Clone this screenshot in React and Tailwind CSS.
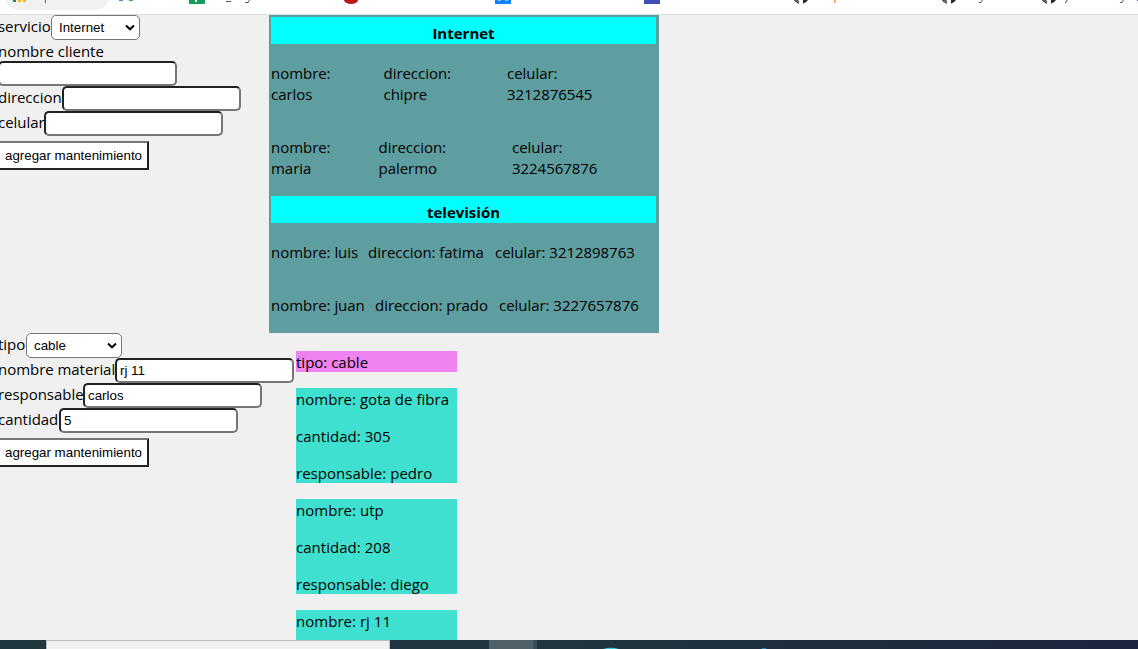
const T = ({ children, className = "" }) => (
  <span className={"block whitespace-nowrap " + className}>{children}</span>
);

function Label({ children, className }) {
  return (
    <label className={"shrink-0 leading-[23px] tracking-[-0.04px] whitespace-nowrap " + className}>
      {children}
    </label>
  );
}

function Field({ label, labelClass, value = "" }) {
  return (
    <div className="flex h-[25px]">
      <Label className={labelClass}>{label}</Label>
      <TextInput value={value} />
    </div>
  );
}

function TextInput({ value = "" }) {
  return (
    <input
      readOnly
      value={value}
      className="block h-[25px] w-[179px] shrink-0 rounded-[5px] border-2 border-t-[#222] border-l-[#222] border-r-[#767676] border-b-[#767676] bg-white px-[3px] font-['Liberation_Sans',sans-serif] text-[13.33px] tracking-normal text-black"
    />
  );
}

function Select({ label, labelClass, value, selectClass }) {
  return (
    <div className="flex h-[25px]">
      <Label className={labelClass}>{label}</Label>
      <div className={"relative h-[25px] shrink-0 " + selectClass}>
        <select className="block h-full w-full appearance-none rounded-[5px] border border-[#767676] bg-white pl-[7px] font-['Liberation_Sans',sans-serif] text-[13.33px] tracking-normal text-black">
          <option>{value}</option>
        </select>
        <svg className="pointer-events-none absolute top-[9px] right-[5px]" width="10" height="8" viewBox="0 0 10 8">
          <path d="M1 1.500 5 5.300 9 1.500" fill="none" stroke="#000" strokeWidth="2" />
        </svg>
      </div>
    </div>
  );
}

function AddButton() {
  return (
    <button className="mt-[5px] block h-[29px] w-[151px] border-2 border-t-[#767676] border-l-[#767676] border-r-[#222] border-b-[#222] bg-white text-center font-['Liberation_Sans',sans-serif] text-[13.33px] tracking-normal whitespace-nowrap text-black">
      agregar mantenimiento
    </button>
  );
}

function Client({ name, address, phone, cols, stacked }) {
  const pair = (k, v) =>
    stacked ? (
      <div>
        <T>{k}:</T>
        <T>{v}</T>
      </div>
    ) : (
      <T>{k}: {v}</T>
    );
  return (
    <div className={"grid leading-[21px] tracking-[-0.04px] " + cols}>
      {pair("nombre", name)}
      {pair("direccion", address)}
      {pair("celular", phone)}
    </div>
  );
}

function Material({ name, amount, owner }) {
  return (
    <div className="mt-4 flex h-[95px] flex-col gap-[14px] bg-[#40e0d0] leading-[23px] tracking-[0.03px]">
      <T>nombre: {name}</T>
      <T>cantidad: {amount}</T>
      <T>responsable: {owner}</T>
    </div>
  );
}

function Bookmarks() {
  return (
    <svg className="block h-[15px] w-[1138px] bg-white" viewBox="0 0 1138 15">
      <path d="M6 0a13 10 0 0 0 13 10H95a13 10 0 0 0 13-10Z" fill="#f1f1f1" />
      <path d="M13 0h3v2h-3z" fill="#1e8e3e" />
      <path d="M18 0h3v2h-3zM23 0h3v2h-3z" fill="#fbb400" />
      <path d="M45.500 0v3" stroke="#6b5b80" />
      <path d="M119 0h4v1h-4z" fill="#4285f4" />
      <path d="M129 0h4v1h-4z" fill="#34a853" />
      <path d="M189 0h16v3a1 1 0 0 1-1 1h-14a1 1 0 0 1-1-1z" fill="#0f9d58" />
      <path d="M195 0h2v2h-2z" fill="#fff" />
      <path d="M226 1.500h5M245 2.500h3l1.500-2.500" fill="none" stroke="#555" />
      <path d="M344 0a7 4 0 0 0 14 0z" fill="#b91517" />
      <path d="M495 0h16v4h-16z" fill="#0a84ff" />
      <path d="M498 .500h3M505 .500h3" stroke="#8cc8ff" />
      <path d="M644 0h16v4h-16z" fill="#3f51b5" />
      {[794, 942, 1042].map((x) => (
        <g key={x} transform={`translate(${x} 0)`}>
          <path d="M.5 0Q2 2.500 5 3.200M2.500 0q1 1.500 2.500 1" fill="none" stroke="#24292f" strokeWidth="1.300" />
          <path d="M9 0h5q-1.500 2.500-5 3.700z" fill="#24292f" />
        </g>
      ))}
      <path d="M834.500 0v3" stroke="#e8a25c" />
      <path d="M835.500 0v3" stroke="#9ccbf0" />
      <path d="M979 2.500h2l1.500-2.500M1065 2.500h1l1-2.500M1120 2.500h2l1.500-2.500M1137.500 0v1" fill="none" stroke="#555577" />
      <path d="M0 14.500h1138" stroke="#dadce0" />
    </svg>
  );
}

function Taskbar() {
  return (
    <div className="flex h-[9px] bg-linear-to-r from-[#20373f] via-[#20353f] to-[#1c243c]">
      <div className="w-[46px]" />
      <div className="w-[344px] border-x border-t border-[#bcbcbc] bg-[#f1f1f1]" />
      <div className="w-[99px]" />
      <div className="w-[44px] bg-[#4f6068]" />
      <div className="w-[4px] bg-[#3a4a56]" />
      <svg className="block h-[9px] w-[240px]" viewBox="0 0 240 9">
        <path d="M66 9q8-2.500 16 0z" fill="#39c5d8" />
        <path d="M224 9q3-2 6 0z" fill="#2d8bc9" />
      </svg>
    </div>
  );
}

export default function App() {
  return (
    <div className="flex h-[649px] w-[1138px] flex-col overflow-hidden bg-[#f0f0f0] font-['Open_Sans',sans-serif] text-[15px] text-black">
      <Bookmarks />
      <main className="h-[625px] overflow-hidden">
        <section className="flex h-[318px]">
          <form className="-ml-[2px] w-[271px] shrink-0">
            <Select label="servicio" labelClass="w-[53px]" value="Internet" selectClass="w-[89px]" />
            <T className="h-[21px] leading-[22px]">nombre cliente</T>
            <TextInput />
            <Field label="direccion" labelClass="w-[64px]" />
            <Field label="celular" labelClass="w-[46px]" />
            <AddButton />
          </form>
          <div className="h-[318px] w-[390px] bg-[#5f9ea0] pt-[2px] pr-[3px] pl-[2px]">
            <h2 className="h-[27px] bg-[#0ff] text-center leading-[33px] font-bold">Internet</h2>
            <div className="flex h-[152px] flex-col gap-8 pt-[19px]">
              <Client stacked name="carlos" address="chipre" phone="3212876545" cols="grid-cols-[112.500px_123.500px_1fr]" />
              <Client stacked name="maria" address="palermo" phone="3224567876" cols="grid-cols-[107.500px_133.500px_1fr]" />
            </div>
            <h2 className="h-[27px] bg-[#0ff] text-center leading-[33px] font-bold">televisión</h2>
            <div className="flex flex-col gap-8 pt-[19px]">
              <Client name="luis" address="fatima" phone="3212898763" cols="grid-cols-[97px_127px_1fr]" />
              <Client name="juan" address="prado" phone="3227657876" cols="grid-cols-[104px_124px_1fr]" />
            </div>
          </div>
        </section>
        <section className="flex">
          <form className="-ml-[2px] w-[298px] shrink-0">
            <Select label="tipo" labelClass="w-[28px]" value="cable" selectClass="w-[96px]" />
            <Field label="nombre material" labelClass="w-[117px]" value="rj 11" />
            <Field label="responsable" labelClass="w-[85px]" value="carlos" />
            <Field label="cantidad" labelClass="w-[61px]" value="5" />
            <AddButton />
          </form>
          <div className="w-[161px] pt-[18px]">
            <T className="h-[21px] bg-[#ee82ee] leading-[23px]">tipo: cable</T>
            <Material name="gota de fibra" amount="305" owner="pedro" />
            <Material name="utp" amount="208" owner="diego" />
            <Material name="rj 11" amount="5" owner="carlos" />
          </div>
        </section>
      </main>
      <Taskbar />
    </div>
  );
}
